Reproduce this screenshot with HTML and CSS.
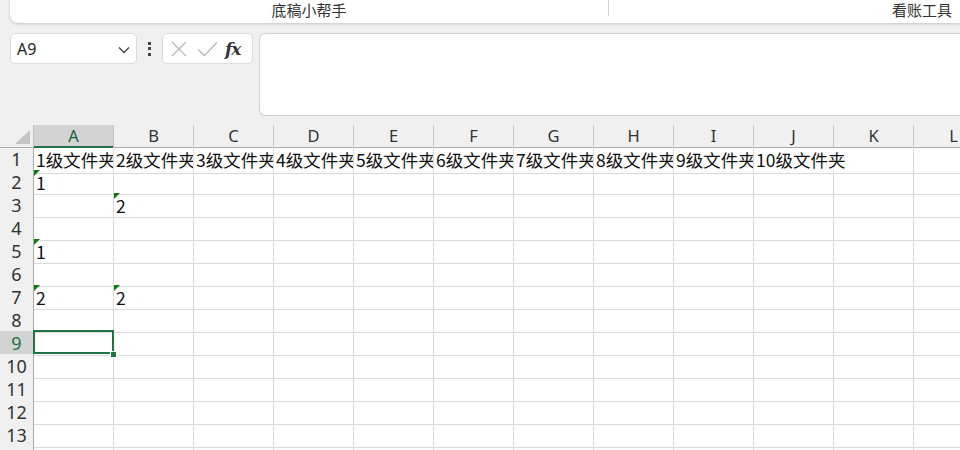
FILE: index.html
```html
<!DOCTYPE html>
<html>
<head>
<meta charset="utf-8">
<link rel="stylesheet" href="styles.css">
</head>
<body>

<div class="ribbon">
  <div class="ribbon-group left"><span>底稿小帮手</span></div>
  <div class="ribbon-group right"><span>看账工具</span></div>
</div>

<div class="formula-row">
  <div class="name-box">
    <span>A9</span>
    <svg class="chevron" width="12" height="8" viewBox="0 0 12 8"><path d="M1 1.5 L6 6.5 L11 1.5" fill="none" stroke="#444" stroke-width="1.3"/></svg>
  </div>
  <div class="more-dots"><i></i><i></i><i></i></div>
  <div class="fx-box">
    <svg width="16" height="16" viewBox="0 0 16 16"><path d="M1 1 L15 15 M15 1 L1 15" stroke="#b8b8b8" stroke-width="1.3" fill="none"/></svg>
    <svg width="21" height="16" viewBox="0 0 21 16"><path d="M1 8.5 L7.5 14.5 L20 1.5" stroke="#b8b8b8" stroke-width="1.3" fill="none"/></svg>
    <span class="fx">fx</span>
  </div>
  <div class="formula-input"></div>
</div>

<div class="sheet">
  <div class="row head">
    <div class="corner"></div>
    <div class="col-head active">A</div>
    <div class="col-head">B</div>
    <div class="col-head">C</div>
    <div class="col-head">D</div>
    <div class="col-head">E</div>
    <div class="col-head">F</div>
    <div class="col-head">G</div>
    <div class="col-head">H</div>
    <div class="col-head">I</div>
    <div class="col-head">J</div>
    <div class="col-head">K</div>
    <div class="col-head">L</div>
  </div>

  <div class="row">
    <div class="row-head">1</div>
    <div class="cell">1级文件夹</div>
    <div class="cell">2级文件夹</div>
    <div class="cell">3级文件夹</div>
    <div class="cell">4级文件夹</div>
    <div class="cell">5级文件夹</div>
    <div class="cell">6级文件夹</div>
    <div class="cell">7级文件夹</div>
    <div class="cell">8级文件夹</div>
    <div class="cell">9级文件夹</div>
    <div class="cell spill">10级文件夹</div>
    <div class="cell"></div>
    <div class="cell"></div>
  </div>

  <div class="row">
    <div class="row-head">2</div>
    <div class="cell note">1</div>
    <div class="cell"></div><div class="cell"></div><div class="cell"></div><div class="cell"></div><div class="cell"></div>
    <div class="cell"></div><div class="cell"></div><div class="cell"></div><div class="cell"></div><div class="cell"></div><div class="cell"></div>
  </div>

  <div class="row">
    <div class="row-head">3</div>
    <div class="cell"></div>
    <div class="cell note">2</div>
    <div class="cell"></div><div class="cell"></div><div class="cell"></div><div class="cell"></div><div class="cell"></div>
    <div class="cell"></div><div class="cell"></div><div class="cell"></div><div class="cell"></div><div class="cell"></div>
  </div>

  <div class="row">
    <div class="row-head">4</div>
    <div class="cell"></div><div class="cell"></div><div class="cell"></div><div class="cell"></div><div class="cell"></div><div class="cell"></div>
    <div class="cell"></div><div class="cell"></div><div class="cell"></div><div class="cell"></div><div class="cell"></div><div class="cell"></div>
  </div>

  <div class="row">
    <div class="row-head">5</div>
    <div class="cell note">1</div>
    <div class="cell"></div><div class="cell"></div><div class="cell"></div><div class="cell"></div><div class="cell"></div>
    <div class="cell"></div><div class="cell"></div><div class="cell"></div><div class="cell"></div><div class="cell"></div><div class="cell"></div>
  </div>

  <div class="row">
    <div class="row-head">6</div>
    <div class="cell"></div><div class="cell"></div><div class="cell"></div><div class="cell"></div><div class="cell"></div><div class="cell"></div>
    <div class="cell"></div><div class="cell"></div><div class="cell"></div><div class="cell"></div><div class="cell"></div><div class="cell"></div>
  </div>

  <div class="row">
    <div class="row-head">7</div>
    <div class="cell note">2</div>
    <div class="cell note">2</div>
    <div class="cell"></div><div class="cell"></div><div class="cell"></div><div class="cell"></div><div class="cell"></div>
    <div class="cell"></div><div class="cell"></div><div class="cell"></div><div class="cell"></div><div class="cell"></div>
  </div>

  <div class="row">
    <div class="row-head">8</div>
    <div class="cell"></div><div class="cell"></div><div class="cell"></div><div class="cell"></div><div class="cell"></div><div class="cell"></div>
    <div class="cell"></div><div class="cell"></div><div class="cell"></div><div class="cell"></div><div class="cell"></div><div class="cell"></div>
  </div>

  <div class="row">
    <div class="row-head active">9</div>
    <div class="cell selected"></div>
    <div class="cell"></div><div class="cell"></div><div class="cell"></div><div class="cell"></div><div class="cell"></div>
    <div class="cell"></div><div class="cell"></div><div class="cell"></div><div class="cell"></div><div class="cell"></div><div class="cell"></div>
  </div>

  <div class="row">
    <div class="row-head">10</div>
    <div class="cell"></div><div class="cell"></div><div class="cell"></div><div class="cell"></div><div class="cell"></div><div class="cell"></div>
    <div class="cell"></div><div class="cell"></div><div class="cell"></div><div class="cell"></div><div class="cell"></div><div class="cell"></div>
  </div>

  <div class="row">
    <div class="row-head">11</div>
    <div class="cell"></div><div class="cell"></div><div class="cell"></div><div class="cell"></div><div class="cell"></div><div class="cell"></div>
    <div class="cell"></div><div class="cell"></div><div class="cell"></div><div class="cell"></div><div class="cell"></div><div class="cell"></div>
  </div>

  <div class="row">
    <div class="row-head">12</div>
    <div class="cell"></div><div class="cell"></div><div class="cell"></div><div class="cell"></div><div class="cell"></div><div class="cell"></div>
    <div class="cell"></div><div class="cell"></div><div class="cell"></div><div class="cell"></div><div class="cell"></div><div class="cell"></div>
  </div>

  <div class="row">
    <div class="row-head">13</div>
    <div class="cell"></div><div class="cell"></div><div class="cell"></div><div class="cell"></div><div class="cell"></div><div class="cell"></div>
    <div class="cell"></div><div class="cell"></div><div class="cell"></div><div class="cell"></div><div class="cell"></div><div class="cell"></div>
  </div>

  <div class="row">
    <div class="row-head">14</div>
    <div class="cell"></div><div class="cell"></div><div class="cell"></div><div class="cell"></div><div class="cell"></div><div class="cell"></div>
    <div class="cell"></div><div class="cell"></div><div class="cell"></div><div class="cell"></div><div class="cell"></div><div class="cell"></div>
  </div>
</div>

</body>
</html>
```

FILE: styles.css
```css
body {
  margin: 0;
  background-color: #f0f0f0;
  font-family: "Noto Sans", "Noto Sans CJK SC", sans-serif;
  color: #222;
  overflow: hidden;
  height: 450px;
}

/* ribbon strip at the top */
.ribbon {
  display: flex;
  margin-left: 10px;
  height: 23px;
  background-color: white;
  border-bottom-left-radius: 8px;
  box-shadow: 0 1px 3px rgba(0,0,0,0.18);
  font-family: "Noto Sans CJK SC", sans-serif;
  font-size: 15px;
  color: #333;
}

.ribbon-group {
  display: flex;
  align-items: flex-start;
  line-height: 20px;
}

.ribbon-group.left {
  width: 598px;
  justify-content: center;
  border-right: 1px solid #d4d4d4;
  height: 16px;
}

.ribbon-group.right {
  flex: 1;
  justify-content: flex-end;
  padding-right: 8px;
}

/* formula bar */
.formula-row {
  display: flex;
  align-items: flex-start;
  padding-left: 10px;
  margin-top: 10px;
  height: 83px;
}

.name-box {
  width: 127px;
  height: 31px;
  box-sizing: border-box;
  background-color: white;
  border: 1px solid #dcdcdc;
  border-radius: 5px;
  display: flex;
  align-items: center;
  justify-content: space-between;
  padding: 0 6px 0 6px;
  font-size: 16px;
}

.chevron {
  margin-top: 2px;
}

.more-dots {
  width: 25px;
  height: 31px;
  display: flex;
  flex-direction: column;
  align-items: center;
  justify-content: center;
  gap: 2.5px;
}

.more-dots i {
  width: 3px;
  height: 3px;
  background-color: #444;
}

.fx-box {
  width: 91px;
  height: 31px;
  box-sizing: border-box;
  background-color: white;
  border: 1px solid #dcdcdc;
  border-radius: 5px;
  display: flex;
  align-items: center;
  padding-left: 8px;
  gap: 10px;
}

.fx {
  font-family: "DejaVu Serif", serif;
  font-style: italic;
  font-weight: bold;
  font-size: 17px;
  color: #333;
  margin-left: -3px;
  letter-spacing: -1px;
}

.formula-input {
  flex: 1;
  margin-left: 6px;
  height: 83px;
  box-sizing: border-box;
  background-color: white;
  border: 1px solid #d0d0d0;
  border-right: none;
  border-radius: 6px 0 0 6px;
}

/* the sheet grid */
.sheet {
  margin-top: 9px;
  background-color: white;
}

.row {
  display: grid;
  grid-template-columns: 34px repeat(12, 80px);
  height: 23px;
}

.row.head {
  height: 22px;
  background-color: #f0f0f0;
}

.corner {
  position: relative;
  border-right: 1px solid #c4c4c4;
  border-bottom: 1px solid #ababab;
}

.corner::after {
  content: "";
  position: absolute;
  left: 15px;
  top: 5px;
  width: 15px;
  height: 14px;
  background-color: #c4c4c4;
  clip-path: polygon(100% 0, 100% 100%, 0 100%);
}

.col-head {
  box-sizing: border-box;
  border-right: 1px solid #c8c8c8;
  border-bottom: 1px solid #ababab;
  text-align: center;
  font-size: 16.5px;
  line-height: 21px;
  color: #333;
}

.col-head.active {
  background-color: #d3d3d3;
  border-bottom: 2px solid #217346;
  color: #185c37;
}

.row-head {
  box-sizing: border-box;
  background-color: #f0f0f0;
  border-right: 1px solid #ababab;
  border-bottom: 1px solid #d4d4d4;
  text-align: center;
  font-size: 18px;
  line-height: 24px;
  color: #333;
}

.row-head.active {
  background-color: #d3d3d3;
  color: #217346;
}

.cell {
  position: relative;
  box-sizing: border-box;
  border-right: 1px solid #dadada;
  border-bottom: 1px solid #dadada;
  padding-left: 2px;
  font-family: "Noto Sans CJK SC", sans-serif;
  font-size: 17.5px;
  line-height: 26px;
  white-space: nowrap;
  overflow: hidden;
  color: #111;
}

.cell.spill {
  overflow: visible;
  border-right-color: transparent;
  z-index: 1;
}

/* little green triangle in the corner of a cell */
.cell.note::before {
  content: "";
  position: absolute;
  left: 0;
  top: 0;
  width: 6px;
  height: 6px;
  background-color: #0d7a0d;
  clip-path: polygon(0 0, 100% 0, 0 100%);
}

.cell.selected {
  overflow: visible;
  z-index: 2;
}

.cell.selected::before {
  content: "";
  position: absolute;
  left: -1px;
  top: -1px;
  width: 81px;
  height: 24px;
  box-sizing: border-box;
  border: 2px solid #217346;
}

.cell.selected::after {
  content: "";
  position: absolute;
  left: 77px;
  top: 21px;
  width: 5px;
  height: 5px;
  background-color: #217346;
  outline: 1px solid white;
}
```
